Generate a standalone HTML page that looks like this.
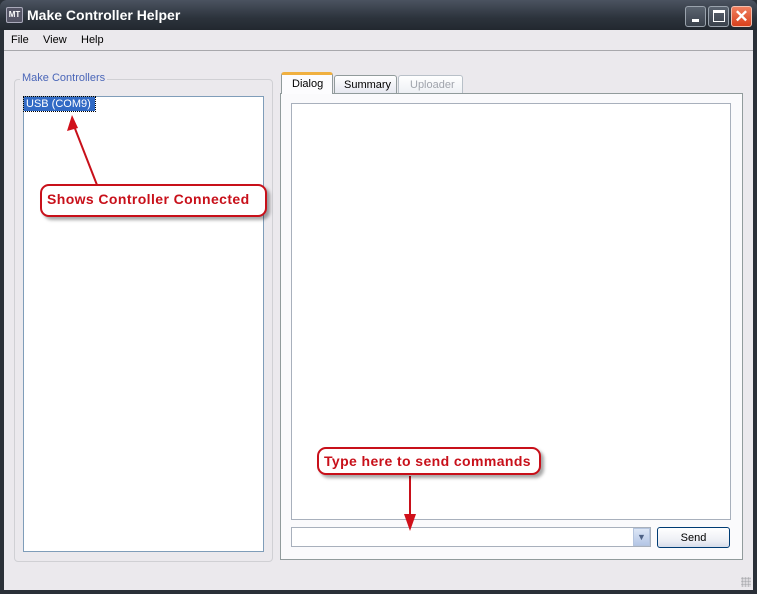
<!DOCTYPE html>
<html><head><meta charset="utf-8"><style>
*{margin:0;padding:0;box-sizing:border-box}
body{width:757px;height:594px;overflow:hidden;background:#2a3038;font-family:Tahoma,"Liberation Sans",sans-serif;font-size:11px;position:relative}
.abs{position:absolute}
#title{left:0;top:0;width:757px;height:30px;background:linear-gradient(#4b5360,#2c333c 60%,#22282f);border-radius:7px 7px 0 0}
#client{left:4px;top:30px;width:749px;height:560px;background:#ebe9ed}
.tb{top:6px;width:21px;height:21px;border:1px solid #9aa3ad;border-radius:3px;background:linear-gradient(#5b6470,#3a414b)}
.callout{background:#fff;border:2px solid #c8101a;border-radius:9px;color:#c8101a;font-family:"Liberation Sans",sans-serif;font-weight:bold;font-size:14px;letter-spacing:0.4px;box-shadow:3px 3px 3px rgba(0,0,0,.35);padding-left:5px}
</style></head><body>
<div id="title" class="abs">
 <div class="abs" style="left:6px;top:7px;width:17px;height:16px;background:#556;border:1px solid #aab;border-radius:2px;color:#fff;font-size:8px;font-weight:bold;text-align:center;line-height:14px">MT</div>
 <div class="abs" style="left:27px;top:7px;color:#fff;font-weight:bold;font-size:14px;font-family:'Liberation Sans',sans-serif">Make Controller Helper</div>
 <div class="abs tb" style="left:685px"><div class="abs" style="left:6px;top:12px;width:7px;height:3px;background:#fff"></div></div>
 <div class="abs tb" style="left:708px"><div class="abs" style="left:4px;top:3px;width:12px;height:12px;border:1px solid #fff;border-top-width:3px"></div></div>
 <div class="abs tb" style="left:731px;background:linear-gradient(#f08060,#d8401c);border-color:#f0c0b0;color:#fff;font-size:17px;font-weight:bold;text-align:center;line-height:19px">✕</div>
</div>
<div id="client" class="abs"></div>
<div class="abs" style="left:11px;top:34px">File</div>
<div class="abs" style="left:43px;top:34px">View</div>
<div class="abs" style="left:81px;top:34px">Help</div>
<div class="abs" style="left:4px;top:50px;width:749px;height:1px;background:#a8a8ac"></div>
<div class="abs" style="left:14px;top:79px;width:259px;height:483px;border:1px solid #d0d0d4;border-radius:4px"></div>
<div class="abs" style="left:20px;top:72px;background:#ebe9ed;color:#4a66b8;padding:0 2px">Make Controllers</div>
<div class="abs" style="left:23px;top:96px;width:241px;height:456px;background:#fff;border:1px solid #7f9db9"></div>
<div class="abs" style="left:24px;top:97px;width:71px;height:14px;background:#316ac5;color:#fff;padding-left:2px;line-height:14px;outline:1px dotted #000">USB (COM9)</div>
<div class="abs" style="left:280px;top:93px;width:463px;height:467px;background:#fafafc;border:1px solid #919b9c"></div>
<div class="abs" style="left:281px;top:72px;width:52px;height:22px;background:#fcfcfe;border:1px solid #919b9c;border-bottom:none;border-top:3px solid #f0b040;border-radius:3px 3px 0 0;padding:3px 0 0 10px">Dialog</div>
<div class="abs" style="left:334px;top:75px;width:63px;height:18px;background:linear-gradient(#fff,#e6e8f0);border:1px solid #919b9c;border-bottom:none;border-radius:3px 3px 0 0;padding:3px 0 0 9px">Summary</div>
<div class="abs" style="left:398px;top:75px;width:65px;height:18px;background:linear-gradient(#fff,#eef0f4);border:1px solid #b8c0c8;border-bottom:none;border-radius:3px 3px 0 0;padding:3px 0 0 11px;color:#a0a4ac">Uploader</div>
<div class="abs" style="left:291px;top:103px;width:440px;height:417px;background:#fff;border:1px solid #a8b0bc"></div>
<div class="abs" style="left:291px;top:527px;width:360px;height:20px;background:#fff;border:1px solid #a8b0bc"></div>
<div class="abs" style="left:633px;top:528px;width:17px;height:18px;background:linear-gradient(#dce6f6,#b4c6e6);border:1px solid #b4c4de;color:#4d6185;font-size:9px;text-align:center;line-height:16px">▼</div>
<div class="abs" style="left:657px;top:527px;width:73px;height:21px;background:linear-gradient(#fff,#eceef4 70%,#d6dcea);border:1px solid #003c74;border-radius:3px;text-align:center;line-height:20px">Send</div>
<div class="abs" style="left:741px;top:577px;width:10px;height:10px;background:radial-gradient(circle,#b0b0b4 1px,transparent 1.5px) 0 0/3px 3px"></div>
<svg class="abs" style="left:0;top:0" width="757" height="594">
 <line x1="97" y1="185" x2="74" y2="126" stroke="#c8101a" stroke-width="2"/>
 <path d="M72,115 L67,131 L78,128 Z" fill="#d0101a"/>
 <line x1="410" y1="476" x2="410" y2="516" stroke="#c8101a" stroke-width="2"/>
 <path d="M404,514 L410,531 L416,514 Z" fill="#d0101a"/>
</svg>
<div class="abs callout" style="left:40px;top:184px;width:227px;height:33px;line-height:27px">Shows Controller Connected</div>
<div class="abs callout" style="left:317px;top:447px;width:224px;height:28px;line-height:25px">Type here to send commands</div>
</body></html>
